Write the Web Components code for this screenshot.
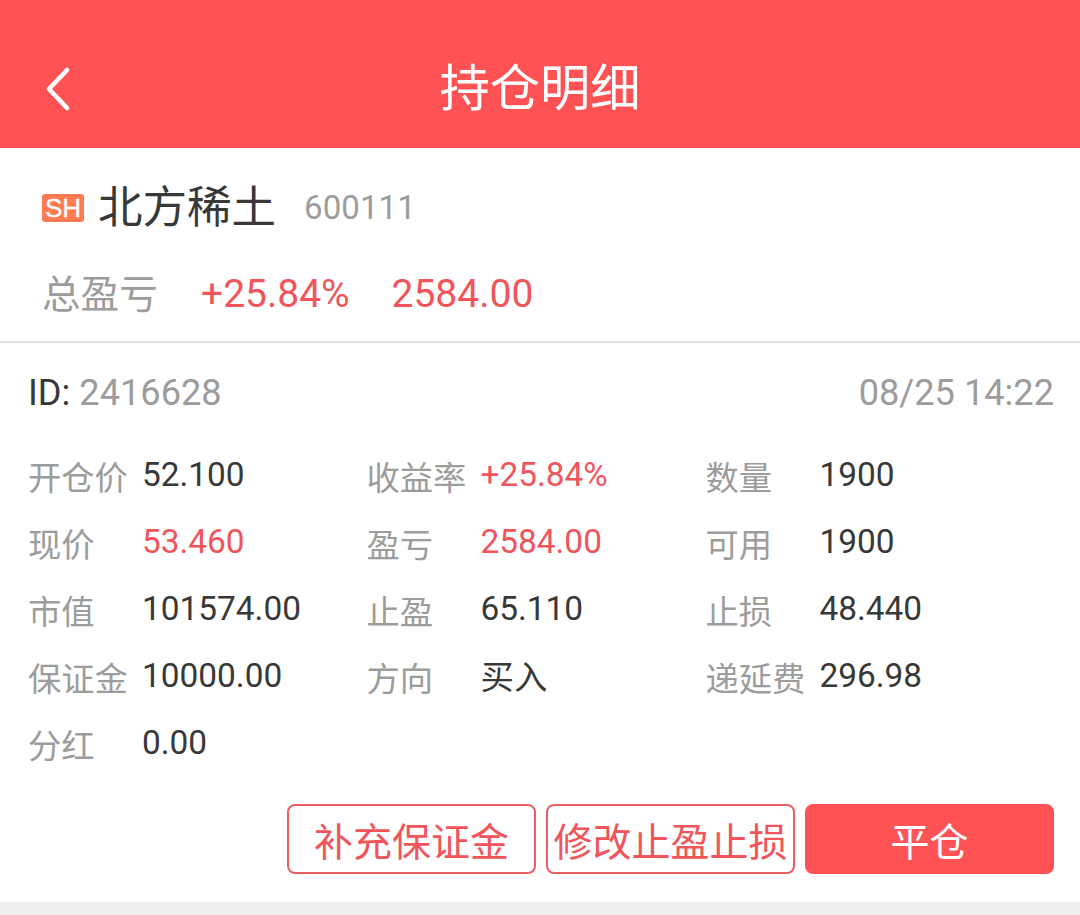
<!DOCTYPE html>
<html lang="zh-CN">
<head>
<meta charset="utf-8">
<title>持仓明细</title>
<style>
  html, body { margin: 0; padding: 0; background: #fff; }
  body {
    width: 1080px;
    height: 915px;
    overflow: hidden;
    font-family: Roboto, "Noto Sans CJK SC", sans-serif;
    color: #333;
  }
</style>
</head>
<body>
<nav-bar>持仓明细</nav-bar>
<stock-summary name="北方稀土" code="600111" market="SH" percent="+25.84%" amount="2584.00"></stock-summary>
<position-card>
  <span slot="id">2416628</span>
  <span slot="time">08/25 14:22</span>
  <position-field label="开仓价">52.100</position-field>
  <position-field label="收益率" up>+25.84%</position-field>
  <position-field label="数量">1900</position-field>
  <position-field label="现价" up>53.460</position-field>
  <position-field label="盈亏" up>2584.00</position-field>
  <position-field label="可用">1900</position-field>
  <position-field label="市值">101574.00</position-field>
  <position-field label="止盈">65.110</position-field>
  <position-field label="止损">48.440</position-field>
  <position-field label="保证金">10000.00</position-field>
  <position-field label="方向" cjk>买入</position-field>
  <position-field label="递延费">296.98</position-field>
  <position-field label="分红">0.00</position-field>
  <action-button slot="actions">补充保证金</action-button>
  <action-button slot="actions">修改止盈止损</action-button>
  <action-button slot="actions" primary>平仓</action-button>
</position-card>

<script>
class NavBar extends HTMLElement {
  constructor() {
    super();
    this._root = this.attachShadow({ mode: "open" });
  }

  connectedCallback() {
    this._root.innerHTML = `
      <style>
        :host {
          display: flex;
          align-items: center;
          justify-content: center;
          height: 148px;
          background: #ff5254;
          color: #fff;
          position: relative;
          font: 50.3px/1 "Noto Sans CJK SC", sans-serif;
        }
        svg {
          position: absolute;
          left: 44px;
          top: 66px;
        }
        .title { margin-top: 20px; }
      </style>
      <svg width="28" height="46" viewBox="0 0 28 46" fill="none">
        <path d="M23 4 L5 23 L23 42" stroke="#fff" stroke-width="4.6" stroke-linecap="round" stroke-linejoin="round"/>
      </svg>
      <span class="title"><slot></slot></span>
    `;
  }
}

class StockSummary extends HTMLElement {
  constructor() {
    super();
    this._root = this.attachShadow({ mode: "open" });
  }

  connectedCallback() {
    const get = (name) => this.getAttribute(name);
    this._root.innerHTML = `
      <style>
        :host {
          display: block;
          box-sizing: border-box;
          height: 195px;
          padding: 30px 0 0 42px;
          border-bottom: 2px solid #e2e2e2;
        }
        .head, .total {
          display: flex;
          align-items: center;
        }
        .head { height: 60px; }
        .badge {
          width: 42px;
          height: 28px;
          border-radius: 3px;
          background: #ff7b50;
          color: #fff;
          font: 26px/29px "Liberation Sans", sans-serif;
          -webkit-text-stroke: .4px #fff;
          text-align: center;
          margin-top: -1px;
        }
        .name {
          margin-left: 14px;
          font: 44.5px/60px "Noto Sans CJK SC", sans-serif;
          color: #383838;
          margin-top: -8px;
        }
        .code {
          margin-left: 28px;
          font: 33px/60px Roboto, sans-serif;
          color: #9c9c9c;
          letter-spacing: .1px;
        }
        .total {
          height: 60px;
          margin-top: 26px;
          color: #f2545b;
          font: 39px/60px Roboto, sans-serif;
        }
        .label {
          width: 159px;
          color: #9c9c9c;
          font: 38.6px/60px "Noto Sans CJK SC", sans-serif;
          margin-top: -6px;
        }
        .percent { width: 190.5px; }
      </style>
      <div class="head">
        <span class="badge">${get("market")}</span>
        <span class="name">${get("name")}</span>
        <span class="code">${get("code")}</span>
      </div>
      <div class="total">
        <span class="label">总盈亏</span>
        <span class="percent">${get("percent")}</span>
        <span>${get("amount")}</span>
      </div>
    `;
  }
}

class PositionCard extends HTMLElement {
  constructor() {
    super();
    this._root = this.attachShadow({ mode: "open" });
  }

  connectedCallback() {
    this._root.innerHTML = `
      <style>
        :host {
          display: block;
          box-sizing: border-box;
          height: 572px;
          padding: 0 26px 0 28px;
          border-bottom: 13px solid #eeeeee;
        }
        .top {
          display: flex;
          justify-content: space-between;
          align-items: center;
          height: 100px;
          font: 36.2px/1 Roboto, sans-serif;
          color: #9c9c9c;
        }
        .id-label { color: #383838; }
        .fields {
          display: grid;
          grid-template-columns: 338.5px 339px 1fr;
          grid-auto-rows: 66.9px;
          height: 334px;
        }
        .actions {
          display: flex;
          justify-content: flex-end;
          gap: 10px;
          margin-top: 27px;
        }
      </style>
      <div class="top">
        <span><span class="id-label">ID:</span> <slot name="id"></slot></span>
        <slot name="time"></slot>
      </div>
      <div class="fields"><slot></slot></div>
      <div class="actions"><slot name="actions"></slot></div>
    `;
  }
}

class PositionField extends HTMLElement {
  constructor() {
    super();
    this._root = this.attachShadow({ mode: "open" });
  }

  connectedCallback() {
    this._root.innerHTML = `
      <style>
        :host {
          display: flex;
          align-items: center;
          white-space: nowrap;
        }
        .label {
          width: 114px;
          flex: none;
          color: #9c9c9c;
          font: 33.3px/67px "Noto Sans CJK SC", sans-serif;
          margin-top: -2px;
        }
        .value {
          color: #383838;
          font: 33.4px/67px Roboto, "Noto Sans CJK SC", sans-serif;
          margin-top: -4px;
        }
        :host([up]) .value { color: #f2545b; }
        :host([cjk]) .value { margin-top: 0; }
      </style>
      <span class="label">${this.getAttribute("label")}</span>
      <span class="value"><slot></slot></span>
    `;
  }
}

class ActionButton extends HTMLElement {
  constructor() {
    super();
    this._root = this.attachShadow({ mode: "open" });
  }

  connectedCallback() {
    this._root.innerHTML = `
      <style>
        :host {
          display: flex;
          align-items: center;
          justify-content: center;
          box-sizing: border-box;
          width: 249px;
          height: 70px;
          border: 2px solid #ea5f64;
          border-radius: 8px;
          background: #fff;
          color: #f2545b;
          font: 39px/1 "Noto Sans CJK SC", sans-serif;
          white-space: nowrap;
        }
        :host([primary]) {
          background: #ff5254;
          border-color: #ff5254;
          color: #fff;
        }
      </style>
      <slot></slot>
    `;
  }
}

customElements.define("nav-bar", NavBar);
customElements.define("stock-summary", StockSummary);
customElements.define("position-card", PositionCard);
customElements.define("position-field", PositionField);
customElements.define("action-button", ActionButton);
</script>
</body>
</html>
